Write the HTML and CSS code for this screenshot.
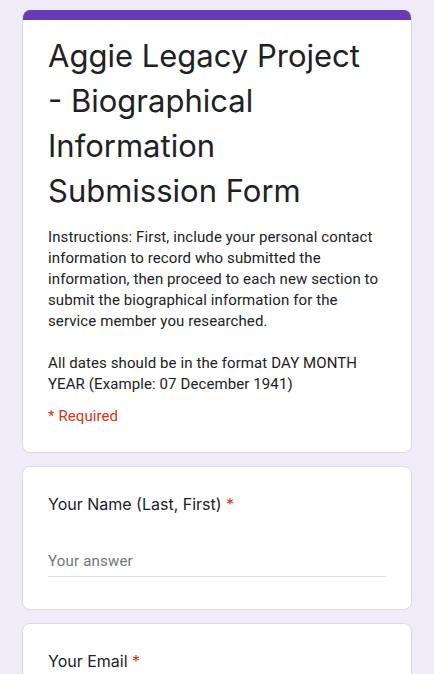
FILE: index.html
```html
<!DOCTYPE html>
<html lang="en">
<head>
<meta charset="utf-8">
<title>Aggie Legacy Project - Biographical Information Submission Form</title>
<link rel="stylesheet" href="styles.css">
</head>
<body>
<main class="form">
  <section class="card header-card">
    <div class="stripe"></div>
    <div class="header-body">
      <h1 class="title">Aggie Legacy Project - Biographical Information Submission Form</h1>
      <p class="desc">Instructions: First, include your personal contact information to record who submitted the information, then proceed to each new section to submit the biographical information for the service member you researched.<br><br>All dates should be in the format DAY MONTH YEAR (Example: 07 December 1941)</p>
      <p class="required-note">* Required</p>
    </div>
  </section>

  <section class="card question">
    <div class="q-title">Your Name (Last, First) <span class="star">*</span></div>
    <div class="answer">Your answer</div>
  </section>

  <section class="card question">
    <div class="q-title">Your Email <span class="star">*</span></div>
    <div class="answer">Your answer</div>
  </section>
</main>
</body>
</html>
```

FILE: styles.css
```css
html, body {
  margin: 0;
  padding: 0;
}
body {
  background: #efebf8;
  font-family: Roboto, "Liberation Sans", sans-serif;
  color: #202124;
}
.form {
  display: flex;
  flex-direction: column;
  gap: 13px;
  padding: 10px 22px;
}
.card {
  background: #fff;
  border: 1px solid #dadce0;
  border-radius: 8px;
  overflow: hidden;
}
.header-card {
  border-top: none;
}
.stripe {
  height: 10px;
  background: #673ab7;
}
.header-body {
  padding: 13px 25px 25px;
}
.title {
  margin: 0;
  max-width: 330px;
  font-family: Inter, Lato, sans-serif;
  font-weight: 400;
  font-size: 31px;
  line-height: 45px;
  color: #202124;
}
.desc {
  margin: 14px 0 0;
  font-size: 15px;
  line-height: 21px;
  letter-spacing: 0.1px;
  color: #202124;
}
.required-note {
  margin: 11px 0 0;
  font-size: 15px;
  line-height: 21px;
  letter-spacing: 0.1px;
  color: #d93025;
}
.question {
  padding: 25px 25px 32px;
}
.q-title {
  font-family: Inter, Lato, sans-serif;
  font-size: 16px;
  line-height: 24px;
  color: #202124;
}
.star {
  color: #d93025;
}
.answer {
  margin-top: 35px;
  padding-bottom: 4px;
  border-bottom: 1px solid #e0e0e0;
  font-size: 15px;
  line-height: 21px;
  color: #70757a;
  letter-spacing: 0.2px;
}
```
